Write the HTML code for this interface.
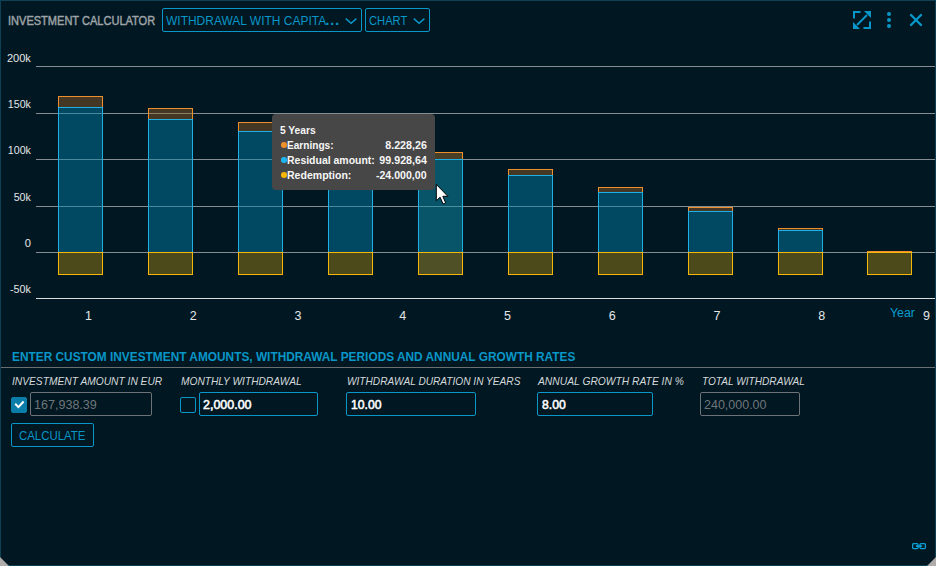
<!DOCTYPE html>
<html><head><meta charset="utf-8"><title>Investment Calculator</title>
<style>
html,body{margin:0;padding:0;}
body{width:936px;height:566px;overflow:hidden;background:#011721;font-family:"Liberation Sans",sans-serif;position:relative;}
.win{position:absolute;left:0;top:0;width:934px;height:564px;border:1px solid #0d3f55;background:#011721;}
.abs{position:absolute;white-space:nowrap;}
.title{left:8px;top:13px;font-size:12.5px;font-weight:normal;-webkit-text-stroke:0.45px #9ea4a7;color:#9ea4a7;line-height:16px;}
.dd{position:absolute;top:8px;height:22px;border:1px solid #0996c8;border-radius:2px;color:#0996c8;font-size:12.5px;line-height:25px;}
.dd span{position:absolute;left:3px;top:0;white-space:nowrap;}
svg text{font-family:"Liberation Sans",sans-serif;}
.yl{font-size:11.5px;fill:#e3e6e8;}
.xl{font-size:12.5px;fill:#e3e6e8;}
.xt{font-size:12.5px;fill:#0a9ccf;}
.tip{position:absolute;left:272px;top:114px;width:163px;height:76px;background:#474747;border-radius:4px;color:#f6f6f6;font-size:11px;font-weight:bold;}
.tip div{position:absolute;white-space:nowrap;line-height:14px;}
.tip i{position:absolute;width:5.6px;height:5.6px;margin:0.2px;border-radius:50%;}
.sect{left:12px;top:349px;font-size:12.5px;font-weight:bold;color:#0996c8;line-height:16px;}
.hr{position:absolute;left:1px;top:367px;width:934px;height:1px;background:#6a6f72;}
.lbl{top:374px;font-size:11px;font-style:italic;color:#d5d9db;line-height:14px;}
.inp{position:absolute;top:392px;height:22px;border:1px solid #0996c8;border-radius:2px;color:#fff;font-weight:normal;-webkit-text-stroke:0.55px #fff;font-size:12.5px;line-height:25px;}
.inp span{position:absolute;top:0;white-space:nowrap;}
.inp.dis{border-color:#6c7276;color:#6f767a;font-weight:normal;-webkit-text-stroke:0;}
.cb{position:absolute;top:397px;width:14px;height:14px;border:1px solid #0996c8;border-radius:2px;}
.cb.on{background:#0a7ea8;border-color:#0a7ea8;}
.btn{position:absolute;left:11px;top:423px;width:81px;height:22px;border:1px solid #0996c8;border-radius:2px;color:#0996c8;font-size:12.5px;line-height:25px;}
.btn span{position:absolute;left:7.2px;top:0;}
</style></head><body>
<div class="win"></div>
<div id="title" class="abs title" style="transform:scaleX(0.8827);transform-origin:0 0;">INVESTMENT CALCULATOR</div>
<div class="dd" style="left:162px;width:198px;"><span id="dd1" style="transform:scaleX(0.9586);transform-origin:0 0;">WITHDRAWAL WITH CAPITA</span><span id="dots" style="left:162.5px;top:-1px;letter-spacing:0.95px;font-size:14px;font-weight:bold;">...</span>
<svg style="position:absolute;left:182px;top:8px" width="14" height="8" viewBox="0 0 14 8"><path d="M0.8 1.6L6.1 6.3L11.4 1.6" fill="none" stroke="#0996c8" stroke-width="1.5"/></svg></div>
<div class="dd" style="left:365px;width:63px;"><span id="dd2" style="transform:scaleX(0.8939);transform-origin:0 0;">CHART</span>
<svg style="position:absolute;left:47px;top:8px" width="14" height="8" viewBox="0 0 14 8"><path d="M0.8 1.6L6.1 6.3L11.4 1.6" fill="none" stroke="#0996c8" stroke-width="1.5"/></svg></div>

<svg class="abs" style="left:853px;top:11px" width="18" height="18" viewBox="0 0 18 18"><g fill="none" stroke="#0996c8" stroke-width="2"><path d="M1 7.5V1H7.5"/><path d="M10.5 17H17V10.5"/><path d="M4 14L14 4"/></g><path d="M11 0H18V7Z" fill="#0996c8"/><path d="M0 11V18H7Z" fill="#0996c8"/></svg>
<svg class="abs" style="left:885px;top:10px" width="8" height="20" viewBox="0 0 8 20"><g fill="#0996c8"><circle cx="4" cy="4" r="2"/><circle cx="4" cy="10" r="2"/><circle cx="4" cy="16" r="2"/></g></svg>
<svg class="abs" style="left:908px;top:12px" width="16" height="16" viewBox="0 0 16 16"><path d="M3 3L13 13M13 3L3 13" stroke="#0996c8" stroke-width="2.4" stroke-linecap="round" fill="none"/></svg>

<svg class="abs" style="left:0;top:0" width="936" height="340" viewBox="0 0 936 340" shape-rendering="crispEdges" text-rendering="auto">
<path d="M36 66.5H935" stroke="#858d91" stroke-width="1"/>
<path d="M36 113.5H935" stroke="#858d91" stroke-width="1"/>
<path d="M36 159.5H935" stroke="#858d91" stroke-width="1"/>
<path d="M36 206.5H935" stroke="#858d91" stroke-width="1"/>
<path d="M36 252.5H935" stroke="#858d91" stroke-width="1"/>
<path d="M36 298.5H935" stroke="#d9dcde" stroke-width="1"/>
<text id="yl0" x="6.9" y="62" class="yl" textLength="24.0" lengthAdjust="spacingAndGlyphs">200k</text>
<text id="yl1" x="7.8" y="108" class="yl" textLength="23.1" lengthAdjust="spacingAndGlyphs">150k</text>
<text id="yl2" x="7.8" y="154" class="yl" textLength="23.1" lengthAdjust="spacingAndGlyphs">100k</text>
<text id="yl3" x="13.7" y="201" class="yl" textLength="17.2" lengthAdjust="spacingAndGlyphs">50k</text>
<text id="yl4" x="24.7" y="247" class="yl" textLength="6.2" lengthAdjust="spacingAndGlyphs">0</text>
<text id="yl5" x="9.9" y="293" class="yl" textLength="21.0" lengthAdjust="spacingAndGlyphs">-50k</text>
<rect x="58.5" y="96.5" width="44" height="11.0" fill="rgba(170,105,40,0.40)" stroke="#ec8f2c"/>
<rect x="58.5" y="107.5" width="44" height="145.0" fill="rgba(3,136,177,0.45)" stroke="#20b0e6"/>
<rect x="58.5" y="252.5" width="44" height="22.0" fill="rgba(190,150,20,0.40)" stroke="#f5b70a"/>
<rect x="148.5" y="108.5" width="44" height="11.0" fill="rgba(170,105,40,0.40)" stroke="#ec8f2c"/>
<rect x="148.5" y="119.5" width="44" height="133.0" fill="rgba(3,136,177,0.45)" stroke="#20b0e6"/>
<rect x="148.5" y="252.5" width="44" height="22.0" fill="rgba(190,150,20,0.40)" stroke="#f5b70a"/>
<rect x="238.5" y="122.5" width="44" height="9.0" fill="rgba(170,105,40,0.40)" stroke="#ec8f2c"/>
<rect x="238.5" y="131.5" width="44" height="121.0" fill="rgba(3,136,177,0.45)" stroke="#20b0e6"/>
<rect x="238.5" y="252.5" width="44" height="22.0" fill="rgba(190,150,20,0.40)" stroke="#f5b70a"/>
<rect x="328.5" y="136.5" width="44" height="9.0" fill="rgba(170,105,40,0.40)" stroke="#ec8f2c"/>
<rect x="328.5" y="145.5" width="44" height="107.0" fill="rgba(3,136,177,0.45)" stroke="#20b0e6"/>
<rect x="328.5" y="252.5" width="44" height="22.0" fill="rgba(190,150,20,0.40)" stroke="#f5b70a"/>
<rect x="418.5" y="152.5" width="44" height="7.0" fill="rgba(175,120,45,0.42)" stroke="#ec8f2c"/>
<rect x="418.5" y="159.5" width="44" height="93.0" fill="rgba(15,145,175,0.50)" stroke="#20b0e6"/>
<rect x="418.5" y="252.5" width="44" height="22.0" fill="rgba(190,160,45,0.42)" stroke="#f5b70a"/>
<rect x="508.5" y="169.5" width="44" height="6.0" fill="rgba(170,105,40,0.40)" stroke="#ec8f2c"/>
<rect x="508.5" y="175.5" width="44" height="77.0" fill="rgba(3,136,177,0.45)" stroke="#20b0e6"/>
<rect x="508.5" y="252.5" width="44" height="22.0" fill="rgba(190,150,20,0.40)" stroke="#f5b70a"/>
<rect x="598.5" y="187.5" width="44" height="5.0" fill="rgba(170,105,40,0.40)" stroke="#ec8f2c"/>
<rect x="598.5" y="192.5" width="44" height="60.0" fill="rgba(3,136,177,0.45)" stroke="#20b0e6"/>
<rect x="598.5" y="252.5" width="44" height="22.0" fill="rgba(190,150,20,0.40)" stroke="#f5b70a"/>
<rect x="688.5" y="207.5" width="44" height="4.0" fill="rgba(170,105,40,0.40)" stroke="#ec8f2c"/>
<rect x="688.5" y="211.5" width="44" height="41.0" fill="rgba(3,136,177,0.45)" stroke="#20b0e6"/>
<rect x="688.5" y="252.5" width="44" height="22.0" fill="rgba(190,150,20,0.40)" stroke="#f5b70a"/>
<rect x="778.5" y="228.5" width="44" height="2.0" fill="rgba(170,105,40,0.40)" stroke="#ec8f2c"/>
<rect x="778.5" y="230.5" width="44" height="22.0" fill="rgba(3,136,177,0.45)" stroke="#20b0e6"/>
<rect x="778.5" y="252.5" width="44" height="22.0" fill="rgba(190,150,20,0.40)" stroke="#f5b70a"/>
<rect x="867.5" y="251.5" width="44" height="1.0" fill="rgba(170,105,40,0.40)" stroke="#ec8f2c"/>
<rect x="867.5" y="252.5" width="44" height="22.0" fill="rgba(190,150,20,0.40)" stroke="#f5b70a"/>
<text id="xl0" x="88.5" y="320" text-anchor="middle" class="xl">1</text>
<text id="xl1" x="193.2" y="320" text-anchor="middle" class="xl">2</text>
<text id="xl2" x="298.0" y="320" text-anchor="middle" class="xl">3</text>
<text id="xl3" x="402.8" y="320" text-anchor="middle" class="xl">4</text>
<text id="xl4" x="507.5" y="320" text-anchor="middle" class="xl">5</text>
<text id="xl5" x="612.2" y="320" text-anchor="middle" class="xl">6</text>
<text id="xl6" x="717.0" y="320" text-anchor="middle" class="xl">7</text>
<text id="xl7" x="821.8" y="320" text-anchor="middle" class="xl">8</text>
<text id="xl8" x="926.5" y="320" text-anchor="middle" class="xl">9</text>
<text id="xt" x="890" y="317" class="xt" textLength="25.0" lengthAdjust="spacingAndGlyphs">Year</text>
</svg>

<div class="tip">
<div id="t0" style="left:8px;top:9px;transform:scaleX(0.9311);transform-origin:0 0;">5 Years</div>
<i style="left:9px;top:28px;background:#ec8f2c"></i><div id="t1" style="left:15px;top:24px;transform:scaleX(0.9185);transform-origin:0 0;">Earnings:</div><div id="v1" style="right:8px;top:24px;transform:scaleX(0.9713);transform-origin:100% 0;">8.228,26</div>
<i style="left:9px;top:43px;background:#1fb5ee"></i><div id="t2" style="left:15px;top:39px;transform:scaleX(0.9513);transform-origin:0 0;">Residual amount:</div><div id="v2" style="right:8px;top:39px;transform:scaleX(0.9727);transform-origin:100% 0;">99.928,64</div>
<i style="left:9px;top:58px;background:#f5b70a"></i><div id="t3" style="left:15px;top:54px;transform:scaleX(0.9578);transform-origin:0 0;">Redemption:</div><div id="v3" style="right:8px;top:54px;transform:scaleX(0.9637);transform-origin:100% 0;">-24.000,00</div>
</div>
<svg class="abs" style="left:434px;top:182px" width="18" height="24" viewBox="0 0 18 24"><path transform="translate(2.3 2.4)" d="M0 0V16.4L3.8 12.8L6.8 19.6L9.4 18.5L6.5 11.9H11.6Z" fill="#fff" stroke="#000" stroke-width="1" stroke-linejoin="miter"/></svg>

<div id="sect" class="abs sect" style="transform:scaleX(0.9492);transform-origin:0 0;">ENTER CUSTOM INVESTMENT AMOUNTS, WITHDRAWAL PERIODS AND ANNUAL GROWTH RATES</div>
<div class="hr"></div>
<div id="l1" class="abs lbl" style="left:12px;transform:scaleX(0.9298);transform-origin:0 0;">INVESTMENT AMOUNT IN EUR</div>
<div id="l2" class="abs lbl" style="left:180.5px;transform:scaleX(0.9256);transform-origin:0 0;">MONTHLY WITHDRAWAL</div>
<div id="l3" class="abs lbl" style="left:347px;transform:scaleX(0.9200);transform-origin:0 0;">WITHDRAWAL DURATION IN YEARS</div>
<div id="l4" class="abs lbl" style="left:537.5px;transform:scaleX(0.9349);transform-origin:0 0;">ANNUAL GROWTH RATE IN %</div>
<div id="l5" class="abs lbl" style="left:701.5px;transform:scaleX(0.9182);transform-origin:0 0;">TOTAL WITHDRAWAL</div>

<div class="cb on" style="left:11px"><svg style="position:absolute;left:0;top:0" width="14" height="14" viewBox="0 0 14 14"><path d="M3.2 5.8L6.4 9.1L11.6 3.5" fill="none" stroke="#fff" stroke-width="2"/></svg></div>
<div class="inp dis" style="left:30px;width:120px"><span id="i1" style="left:3px;transform:scaleX(1.0038);transform-origin:0 0;">167,938.39</span></div>
<div class="cb" style="left:180px"></div>
<div class="inp" style="left:199px;width:117px"><span id="i2" style="left:2.7px;transform:scaleX(0.9965);transform-origin:0 0;">2,000.00</span></div>
<div class="inp" style="left:346px;width:128px"><span id="i3" style="left:4px;transform:scaleX(0.9718);transform-origin:0 0;">10.00</span></div>
<div class="inp" style="left:537px;width:114px"><span id="i4" style="left:4px;transform:scaleX(0.9736);transform-origin:0 0;">8.00</span></div>
<div class="inp dis" style="left:700px;width:98px"><span id="i5" style="left:3.4px;transform:scaleX(0.9990);transform-origin:0 0;">240,000.00</span></div>
<div class="btn"><span id="btn" style="transform:scaleX(0.9131);transform-origin:0 0;">CALCULATE</span></div>

<svg class="abs" style="left:911px;top:542px" width="16" height="8" viewBox="0 0 16 8"><g fill="none" stroke="#0aa0d6" stroke-width="1.3"><rect x="1.6" y="1.7" width="5.4" height="4.9" rx="1"/><rect x="9" y="1.7" width="5.4" height="4.9" rx="1"/><path d="M4.8 4.15H11.2" stroke-width="1.6"/></g></svg>
<svg class="abs" style="left:0;top:557px" width="9" height="9" viewBox="0 0 9 9"><path d="M0 0L9 9H0Z" fill="#b0acab"/></svg>
<svg class="abs" style="left:927px;top:557px" width="9" height="9" viewBox="0 0 9 9"><path d="M9 0V9H0Z" fill="#b0acab"/></svg>
</body></html>
